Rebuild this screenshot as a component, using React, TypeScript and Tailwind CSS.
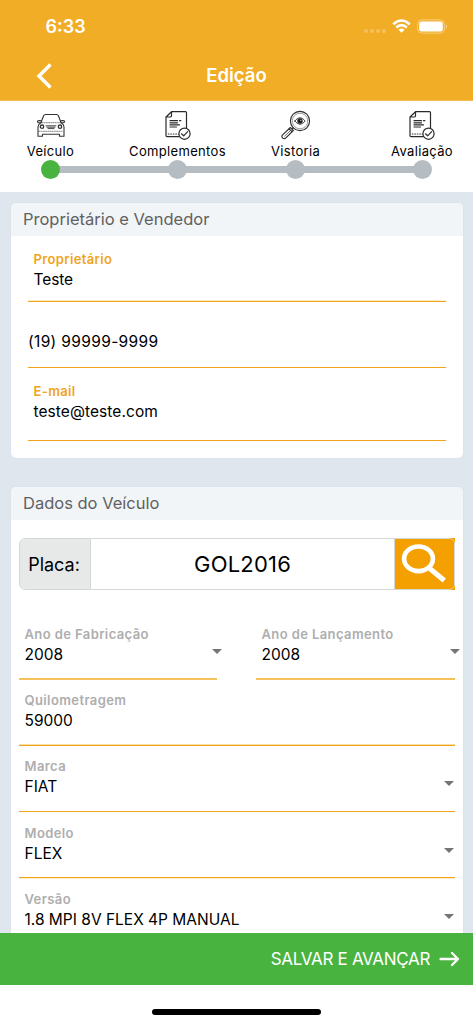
import type { ReactNode } from 'react';

function CarIcon() {
  return (
    <svg width="30" height="30" viewBox="0 0 30 30" fill="none" stroke="#333" strokeWidth="1.1" strokeLinejoin="round" strokeLinecap="round">
      <path d="M5 12.5 L7.6 5.8 Q8 4.5 9.6 4.5 H20.4 Q22 4.5 22.4 5.8 L25 12.5" />
      <path d="M5.2 12.7 H2.8 Q1.4 12.6 1.4 11.6 Q1.4 10.6 2.8 10.6 H4.4 L5.6 11.4" />
      <path d="M24.8 12.7 H27.2 Q28.6 12.6 28.6 11.6 Q28.6 10.6 27.2 10.6 H25.6 L24.4 11.4" />
      <path d="M4.5 13 Q2 14.5 2 17 V26.3 H6.5 V24.2 H23.5 V26.3 H28 V17 Q28 14.5 25.5 13" />
      <path d="M6 12.7 H24 M3 21.3 H27" strokeWidth=".6" strokeDasharray="1 1.2" />
      <circle cx="6" cy="16.7" r="1.7" strokeWidth="1.3" />
      <circle cx="24" cy="16.7" r="1.7" strokeWidth="1.3" />
      <path d="M10 15.8 H20 M11 17.2 H19 M12 18.6 H18" strokeWidth=".9" />
    </svg>
  );
}

function DocumentIcon() {
  return (
    <svg width="30" height="30" viewBox="0 0 30 30" fill="none" stroke="#2b2b2b" strokeWidth="1.2" strokeLinejoin="round" strokeLinecap="round">
      <path d="M8.5 1.7 H22.5 Q23.5 1.7 23.5 2.7 V18 M16.5 26.6 H4 Q3 26.6 3 25.6 V7 L8.5 1.7 V5.8 Q8.5 7 7.3 7 H3" />
      <path d="M7 10.7 H14.5 M16.5 10.7 H17.8 M7 12.8 H14.5 M7 14.9 H16.5 M7 17 H13.5" />
      <path d="M5.3 24 H15.5" strokeDasharray=".6 1.9" />
      <circle cx="21.5" cy="23.7" r="5.6" fill="#fff" />
      <path d="M18.5 23.8 L20.7 25.8 L24.6 21.7" />
    </svg>
  );
}

function InspectionIcon() {
  return (
    <svg width="30" height="30" viewBox="0 0 30 30" fill="none" stroke="#2b2b2b" strokeWidth="1.1" strokeLinejoin="round" strokeLinecap="round">
      <circle cx="19" cy="11" r="9.6" />
      <circle cx="19" cy="11" r="7.7" strokeWidth=".6" strokeDasharray=".7 1.1" />
      <path d="M13.8 11 Q19 4.2 24.2 11 Q19 17.8 13.8 11 Z" strokeWidth=".9" />
      <circle cx="19" cy="11" r="2.2" fill="#111" />
      <circle cx="19.8" cy="10.3" r=".6" fill="#fff" stroke="none" />
      <path d="M9.3 17.5 L1.4 25.2 Q.3 26.5 1.5 27.8 Q2.9 29.3 4.4 28.3 L12.3 20.5 Z M8 18.8 L11 21.7 M11 18.8 L12.2 17.6" />
      <path d="M3.7 26.2 L8.8 21.2" strokeWidth=".7" />
    </svg>
  );
}

function Step({ label, icon, active, className }: { label: string; icon: ReactNode; active?: boolean; className: string }) {
  return (
    <div className={`flex flex-col items-center ${className}`}>
      {icon}
      <div className="h-5 whitespace-nowrap text-[13px] leading-[22px] tracking-[0.33px] text-black">{label}</div>
      <div className={active ? 'relative z-10 size-[19px] rounded-full bg-[#49b33f]' : 'relative z-10 size-[19px] rounded-full bg-[#b5bdc3]'} />
    </div>
  );
}

function Caret() {
  return (
    <svg className="shrink-0" width="10" height="5" viewBox="0 0 10 5">
      <path d="M0 0 H10 L5 5 Z" fill="#757575" />
    </svg>
  );
}

function VehicleField({ label, value, caret, border, className }: { label: string; value: string; caret?: 'inset' | 'outset'; border: string; className: string }) {
  return (
    <div className={`flex h-[66px] justify-between ${border} ${className}`}>
      <div className="whitespace-nowrap pl-[5.5px]">
        <div className="h-5 text-[13px] font-semibold leading-5 tracking-[0.4px] text-[#aeaeae]">{label}</div>
        <div className="h-5 text-[15.5px] leading-[22px] text-black">{value}</div>
      </div>
      {caret && <div className={caret === 'inset' ? 'mr-[1px] pt-[25px]' : '-mr-[5px] pt-[25px]'}><Caret /></div>}
    </div>
  );
}

function OwnerField({ label, value, valueClass }: { label: string; value: string; valueClass: string }) {
  return (
    <div className="pl-[5.5px]">
      <div className="h-5 text-[13px] font-semibold leading-5 tracking-[0.37px] text-[#f0a41c]">{label}</div>
      <div className={`h-5 text-[15.5px] leading-[21px] text-black ${valueClass}`}>{value}</div>
    </div>
  );
}

export default function App() {
  return (
    <div className="flex h-[1024px] w-[473px] flex-col overflow-hidden bg-white font-['Inter','Liberation_Sans',sans-serif]">
      <header className="flex h-[101px] shrink-0 flex-col border-b border-[#f5bb50] bg-[#f2ad26] text-white">
        <div className="flex h-[51px] items-center justify-between pl-[45.5px] pr-[25px]">
          <span className="pt-[2px] text-[18px] font-semibold">6:33</span>
          <div className="flex items-center gap-[6px] pt-[1px]">
            <div className="flex gap-[2px] pt-[9px]">
              {[0, 1, 2, 3].map((dot) => <i key={dot} className="size-1 rounded-full bg-[#f6c05c]" />)}
            </div>
            <svg width="19" height="14" viewBox="0 0 19 14" fill="#fff">
              <path d="M.4 4.4 Q9.5 -4 18.6 4.4 L16.8 6.3 Q9.5 -.6 2.2 6.3 Z M3.3 7.6 Q9.5 2.1 15.7 7.6 L13.9 9.4 Q9.5 5.5 5.1 9.4 Z M6.5 10.7 Q9.5 8.2 12.5 10.7 L9.5 13.7 Z" />
            </svg>
            <svg width="31" height="15" viewBox="0 0 31 15">
              <rect x=".6" y=".9" width="26.8" height="13.2" rx="4" fill="none" stroke="#f8cf7f" />
              <rect x="2.2" y="2.5" width="23.6" height="10" rx="2.3" fill="#fff" />
              <path d="M28.8 5.3 Q30.2 6 30.2 7.5 T28.8 9.7 Z" fill="#f8cf7f" />
            </svg>
          </div>
        </div>
        <div className="grid h-[49px] grid-cols-[1fr_auto_1fr] items-center">
          <svg className="ml-[36px]" width="17" height="26" viewBox="0 0 17 26" fill="none" stroke="#fff" strokeWidth="3.4">
            <path d="M14.5 1.5 L3 13 L14.5 24.5" />
          </svg>
          <h1 className="text-[18.5px] font-semibold">Edição</h1>
          <span />
        </div>
      </header>

      <nav className="relative flex h-[91px] shrink-0 pt-[9px]">
        <div className="absolute left-[51px] top-[65px] h-[7px] w-[371px] bg-[#b5bdc3]" />
        <Step label="Veículo" icon={<CarIcon />} active className="w-[101px]" />
        <Step label="Complementos" icon={<DocumentIcon />} className="ml-[20px] w-[113px]" />
        <Step label="Vistoria" icon={<InspectionIcon />} className="ml-[11px] w-[101px]" />
        <Step label="Avaliação" icon={<DocumentIcon />} className="ml-[26px] w-[100px]" />
      </nav>

      <main className="flex min-h-0 flex-1 flex-col gap-[29px] overflow-hidden bg-[#dfe6ed] pl-[10.5px] pr-[10.5px] pt-[11px]">
        <section className="shrink-0 overflow-hidden rounded-[5px] bg-white pb-[17px] shadow-[0_0_2px_rgba(0,0,0,0.06)]">
          <h2 className="h-[33px] bg-[#f2f5f7] pl-[12.5px] text-[16.5px] leading-[32px] text-[#616161]">Proprietário e Vendedor</h2>
          <div className="ml-[17.5px] mr-[17px]">
            <div className="h-[66px] border-b border-[#f0a41c] pt-[13px] shadow-[inset_0_-1px_0_#fdedcc]"><OwnerField label="Proprietário" value="Teste" valueClass="tracking-[-0.1px]" /></div>
            <div className="h-[66px] border-b border-[#f0a41c] pt-[29px] text-[15.5px] leading-[22px] tracking-[0.35px]">(19) 99999-9999</div>
            <div className="h-[73px] border-b border-[#f0a41c] pt-[13px]"><OwnerField label="E-mail" value="teste@teste.com" valueClass="tracking-[0.07px]" /></div>
          </div>
        </section>

        <section className="shrink-0 overflow-hidden rounded-[5px] bg-white shadow-[0_0_2px_rgba(0,0,0,0.06)]">
          <h2 className="h-[33px] bg-[#f2f5f7] pl-[12.5px] text-[16.5px] leading-[32px] text-[#616161]">Dados do Veículo</h2>
          <div className="ml-[8.5px] mr-[7.5px] pt-[18px]">
            <div className="flex h-[52px] bg-[linear-gradient(90deg,transparent_90%,#f3a000_90%)]">
              <div className="flex flex-1 overflow-hidden rounded-[6px] border border-[#d5d7d7]">
                <div className="flex w-[71px] items-center justify-center border-r border-[#d5d7d7] bg-[#e7e9e8] pr-[2px] text-[18px]">Placa:</div>
                <div className="flex flex-1 items-center justify-center bg-white text-[22px] tracking-[0.2px]">GOL2016</div>
                <div className="w-[60px] border-l border-[#d5d7d7] bg-[#f3a000]">
                  <svg width="58" height="50" viewBox="0 0 58 50" fill="none" stroke="#fff">
                    <ellipse cx="23.5" cy="19.8" rx="14.4" ry="12.3" strokeWidth="4.6" />
                    <path d="M33.5 28.5 L36 30.5" strokeWidth="3" />
                    <path d="M35 29.7 L49.3 41.5" strokeWidth="5" />
                  </svg>
                </div>
              </div>
            </div>
            <div className="mt-6 flex gap-[39px]">
              <VehicleField label="Ano de Fabricação" value="2008" caret="outset" border="border-b-2 border-[#f6c05a]" className="w-[198px] pt-[10px]" />
              <VehicleField label="Ano de Lançamento" value="2008" caret="outset" border="border-b-2 border-[#f6c05a]" className="flex-1 pt-[10px]" />
            </div>
            <VehicleField label="Quilometragem" value="59000" border="border-b border-[#f0a41c] shadow-[inset_0_-1px_0_#fbdca4]" className="pt-[10px]" />
            <VehicleField label="Marca" value="FIAT" caret="inset" border="border-b border-[#f0a41c]" className="pt-[10px]" />
            <VehicleField label="Modelo" value="FLEX" caret="inset" border="border-b border-[#f0a41c] shadow-[0_1px_0_#fdedcc]" className="pt-[11px]" />
            <VehicleField label="Versão" value="1.8 MPI 8V FLEX 4P MANUAL" caret="inset" border="border-b border-[#f0a41c]" className="pt-[11px]" />
          </div>
        </section>
      </main>

      <footer className="shrink-0">
        <button className="flex h-[52px] w-full items-center justify-end gap-[9px] bg-[#49b33f] pr-[13px] text-[17px] text-white">
          <span className="pt-[2px] tracking-[-0.33px]">SALVAR E AVANÇAR</span>
          <svg width="21" height="16" viewBox="0 0 21 16" fill="none" stroke="#fff" strokeWidth="2.3" strokeLinecap="round" strokeLinejoin="round">
            <path d="M1.5 8 H19 M13 2 L19 8 L13 14" />
          </svg>
        </button>
        <div className="flex h-[39px] justify-center pt-[24px]">
          <div className="h-[6px] w-[169px] rounded-full bg-black" />
        </div>
      </footer>
    </div>
  );
}
